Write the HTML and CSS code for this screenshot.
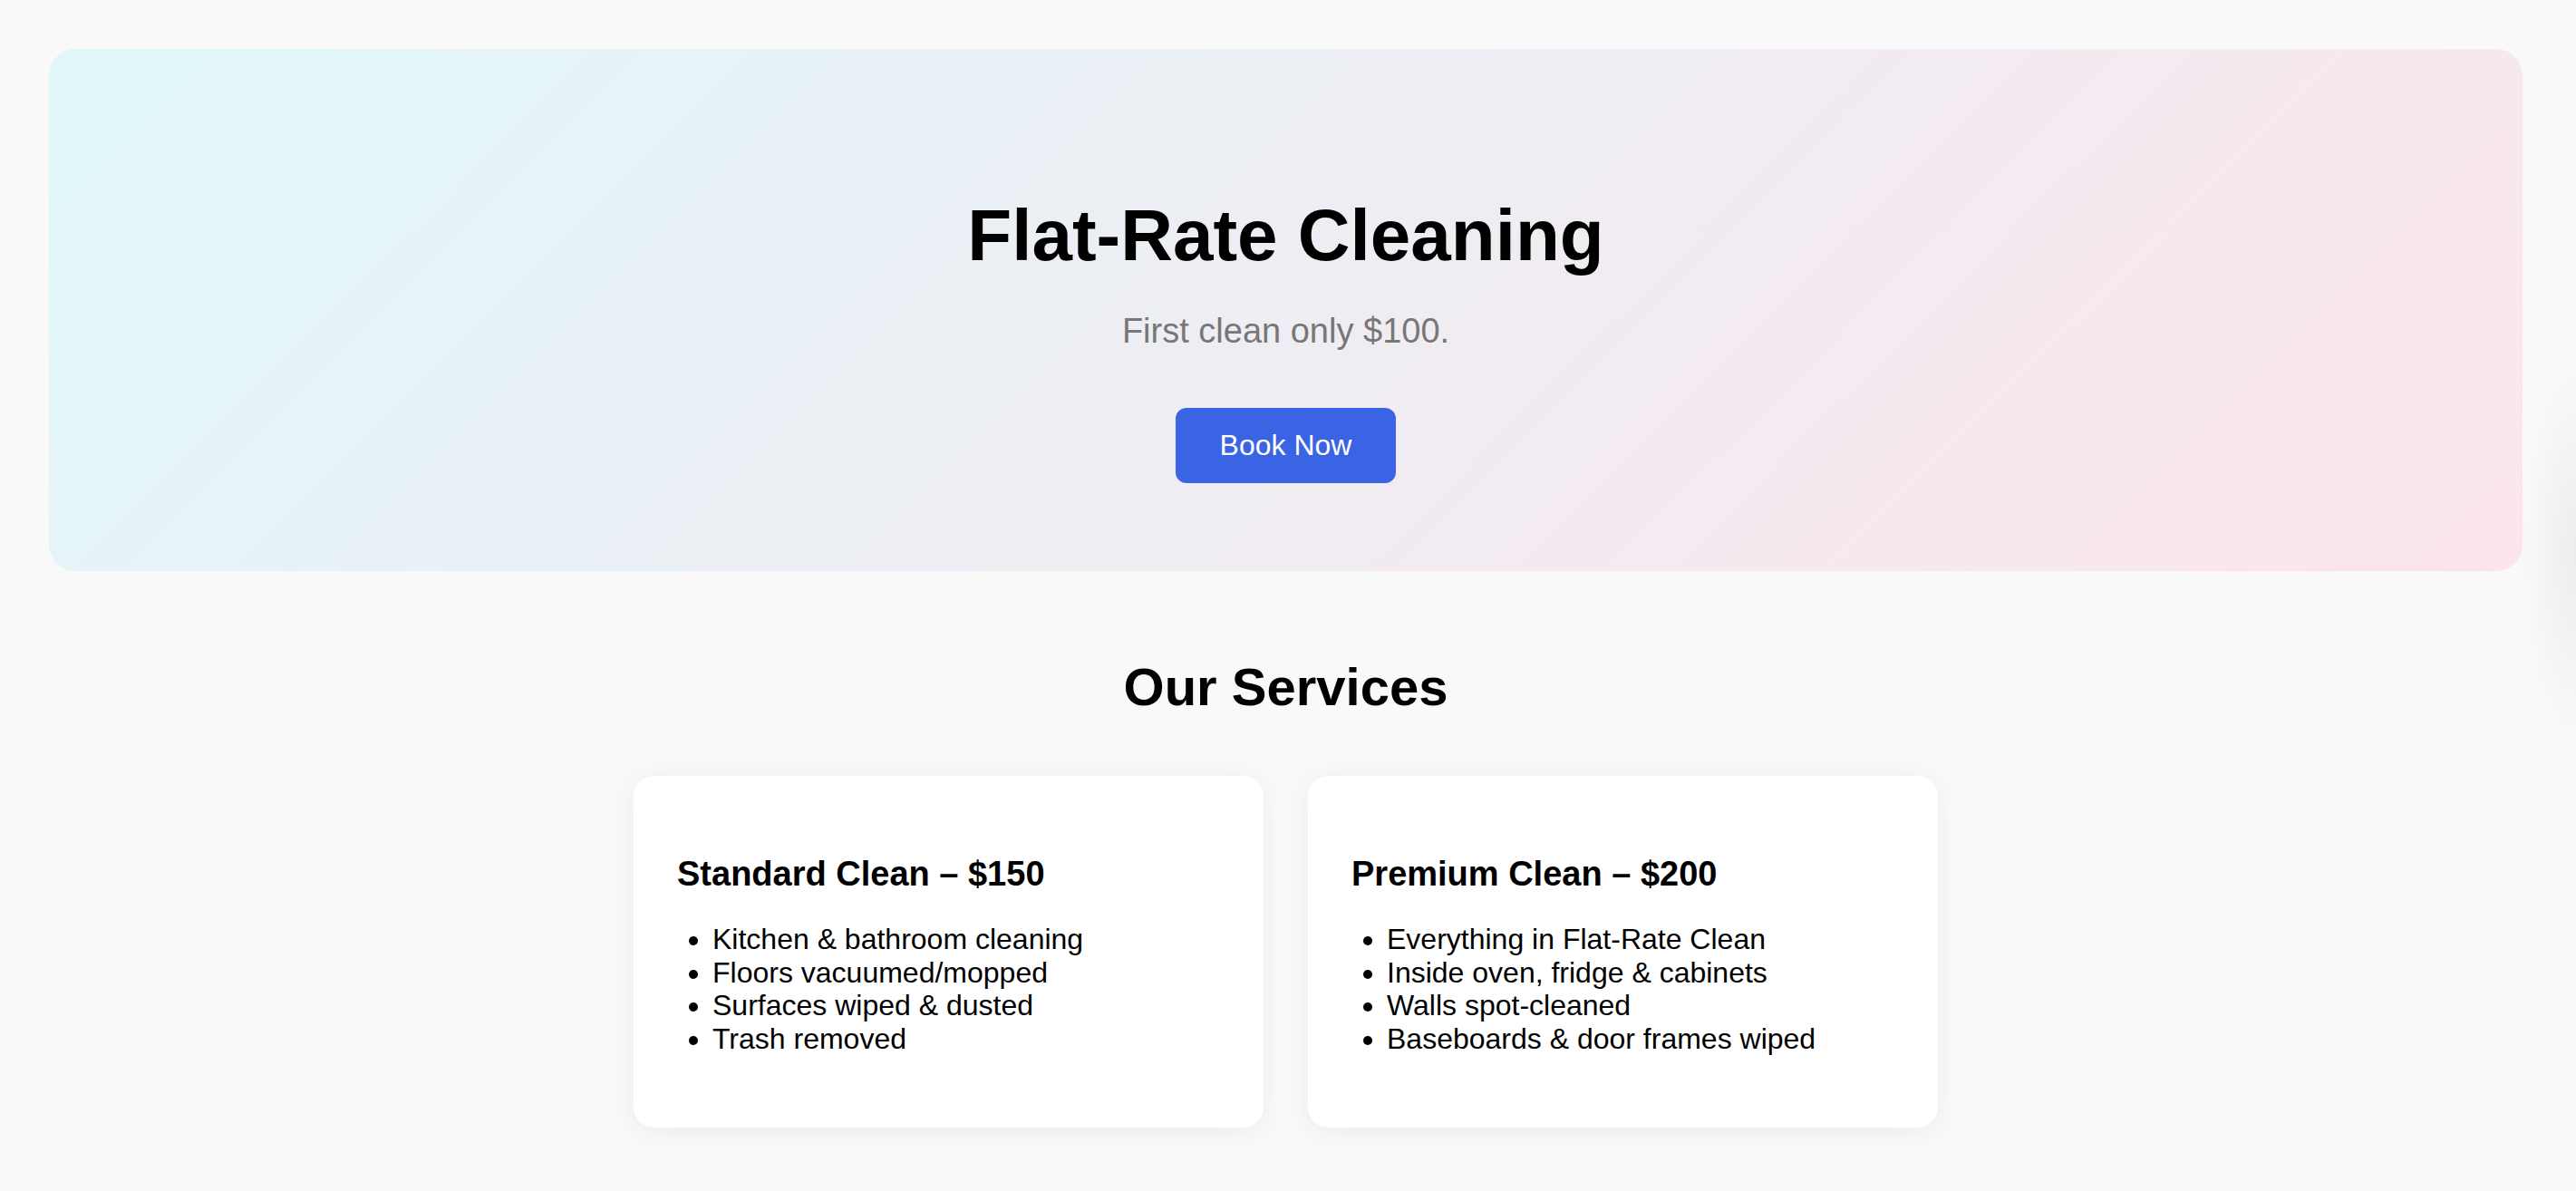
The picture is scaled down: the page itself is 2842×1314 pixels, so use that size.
FILE: index.html
```html
<!DOCTYPE html>
<html lang="en">
<head>
<meta charset="utf-8">
<title>Flat-Rate Cleaning</title>
<link rel="stylesheet" href="styles.css">
</head>
<body>
  <div class="page">
    <header class="hero">
      <h1 class="hero-title">Flat-Rate Cleaning</h1>
      <p class="hero-sub">First clean only $100.</p>
      <button class="hero-btn" type="button">Book Now</button>
    </header>

    <section class="services">
      <h2 class="services-title">Our Services</h2>
      <div class="cards">
        <article class="card">
          <h3 class="card-title">Standard Clean – $150</h3>
          <ul class="card-list">
            <li>Kitchen &amp; bathroom cleaning</li>
            <li>Floors vacuumed/mopped</li>
            <li>Surfaces wiped &amp; dusted</li>
            <li>Trash removed</li>
          </ul>
        </article>
        <article class="card">
          <h3 class="card-title">Premium Clean – $200</h3>
          <ul class="card-list">
            <li>Everything in Flat-Rate Clean</li>
            <li>Inside oven, fridge &amp; cabinets</li>
            <li>Walls spot-cleaned</li>
            <li>Baseboards &amp; door frames wiped</li>
          </ul>
        </article>
      </div>
    </section>
  </div>
  <div class="edge-glow" aria-hidden="true"></div>
</body>
</html>
```

FILE: styles.css
```css
html, body {
  margin: 0;
  padding: 0;
  overflow: hidden;
}

body {
  background: #f9f9f9;
  font-family: "Liberation Sans", Arial, Helvetica, sans-serif;
  color: #000;
  position: relative;
  min-height: 1314px;
}

.page {
  padding: 54px 59px 0 54px;
}

.hero {
  padding: 160px 0 97px;
  text-align: center;
  border-radius: 29px;
  background: linear-gradient(135deg, #e0f7fa 0%, #fce4ec 100%);
}

.hero-title {
  margin: 0;
  font-size: 80px;
  line-height: 92px;
  font-weight: 700;
}

.hero-sub {
  margin: 39px 0 0;
  font-size: 38px;
  line-height: 41px;
  color: #777777;
}

.hero-btn {
  margin-top: 64px;
  display: inline-block;
  padding: 23px 49px;
  font-family: inherit;
  font-size: 32px;
  line-height: 37px;
  color: #ffffff;
  background: #3b64e4;
  border: none;
  border-radius: 12px;
  cursor: pointer;
}

.services {
  text-align: center;
}

.services-title {
  margin: 94px 0 65px;
  font-size: 58px;
  line-height: 67px;
  font-weight: 700;
}

.cards {
  display: flex;
  justify-content: center;
  gap: 49px;
}

.card {
  box-sizing: border-box;
  width: 695px;
  padding: 48px;
  background: #ffffff;
  border-radius: 22px;
  text-align: left;
  box-shadow: 0 4px 28px rgba(0, 0, 0, 0.06);
}

.card-title {
  margin: 38px 0 32px;
  font-size: 38px;
  line-height: 44px;
  font-weight: 700;
}

.card-list {
  margin: 0 0 32px;
  padding-left: 39px;
  font-size: 32px;
  line-height: 36.5px;
}

.edge-glow {
  position: absolute;
  right: 0;
  top: 400px;
  width: 60px;
  height: 420px;
  background: radial-gradient(ellipse 60px 210px at 100% 50%, rgba(0, 0, 0, 0.05), rgba(0, 0, 0, 0) 100%);
  pointer-events: none;
}
```
